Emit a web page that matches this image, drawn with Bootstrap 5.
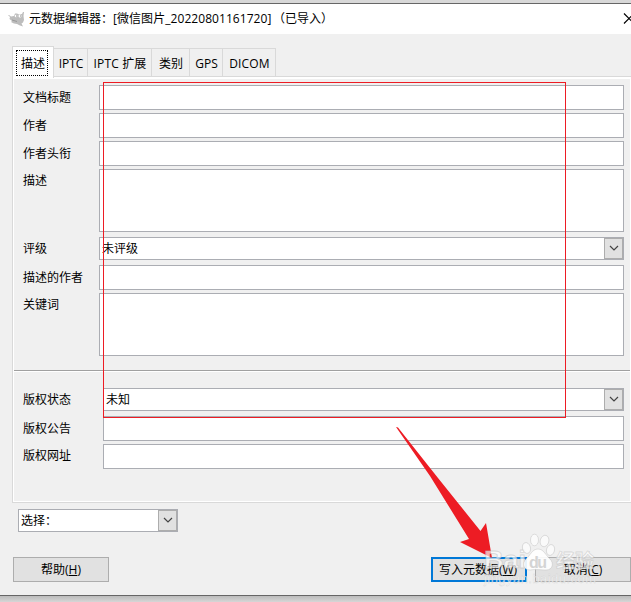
<!DOCTYPE html>
<html lang="zh-CN">
<head>
<meta charset="utf-8">
<title>元数据编辑器</title>
<link href="https://cdn.jsdelivr.net/npm/bootstrap@5.3.0/dist/css/bootstrap.min.css" rel="stylesheet">
<style>
body{width:631px;height:602px;overflow:hidden;background:#d0d0d0;font:12px/16px "Open Sans","Noto Sans CJK SC",sans-serif;color:#000}
.topedge{height:4px;background:#d8d8d8;border-bottom:1px solid #666}
.titlebar{height:30px;background:#fff;padding:0 0 0 8px}
.titlebar svg{flex:none}
.name{width:84px}
.file{width:160px;letter-spacing:.06px}
.dialog{height:562px;background:#f0f0f0;border-bottom:1px solid #666;padding-top:12px}
.shade{height:6px;background:linear-gradient(#bcbcbc,#d6d6d6)}
.tabs{height:30px;padding-left:12px}
.tabs .tabitem{height:28px;border:1px solid #d9d9d9;border-left:0;border-bottom:0;background:#f0f0f0;padding:7px 0 0 1px;text-align:center;white-space:nowrap}
.tabs .tabon{height:32px;width:42px;border-left:1px solid #d9d9d9;background:#fff;padding:3px 0 0 3px;z-index:1}
.tabs .wide{letter-spacing:.15px}
.focusbox{width:32px;height:26px;border:1px dotted #000;line-height:25px;padding-left:2px}
.pane{height:427px;margin-left:12px;border:1px solid #d9d9d9;border-right:0;box-shadow:inset 1px 2px #fff,inset -1px -1px #fff;padding:8px 7px 0 10px}
.frow{margin-bottom:3px}
.frow.after-area{margin-top:5px;margin-bottom:5px}
.cap{width:76px;flex:none;white-space:nowrap;padding-top:5px}
.cap.up{padding-top:4px}
.low .cap{width:80px}
.fld{height:25px;flex:1;background:#fff;border:1px solid #abadb3}
.area{height:63px}
.combo{height:23px;line-height:21px;padding-left:2px;overflow:hidden}
.drop{width:19px;flex:none;background:#e1e1e1;border:1px solid #adadad}
.sep{height:2px;background:#a0a0a0;border-bottom:1px solid #fff;margin:14px -6px 16px -9px}
.low .frow:first-child{margin-bottom:5px}
.choose{margin:6px 0 0 18px;width:160px}
.actions{margin:25px 0 0 13px}
.pushbtn{width:96px;height:25px;background:#e1e1e1;border:1px solid #adadad;border-radius:0;font:inherit;color:#000;padding:0;line-height:23px;text-align:center;white-space:nowrap}
.pushbtn.hot{border:2px solid #0078d7;line-height:21px;padding-right:2px}
.overlay{left:0;top:0;pointer-events:none;z-index:5}
</style>
<script src="https://cdn.jsdelivr.net/npm/bootstrap@5.3.0/dist/js/bootstrap.bundle.min.js"></script>
</head>
<body class="position-relative">
<div class="topedge"></div>
<header class="titlebar d-flex align-items-center">
<svg width="17" height="16" viewBox="0 0 17 16"><path d="M0 4h1l2 1.500 3-.5 1-2.500h2l2 1 3-.5 1-2h1l-.5 4 .5 4-1 2.500-1.500 1 1.500 3-3-1-3-1.500-3-.5-3-1.500 1-1-2.500-2L2 6z" fill="#bdbdbd"/><circle cx="8" cy="5" r="1.300" fill="#fff"/><circle cx="12" cy="5" r="1.500" fill="#fff"/><path d="M8 5h1M12 5h1" stroke="#888"/><path d="M4 9l5 1.500" stroke="#999"/></svg>
<span class="d-flex ms-1 text-nowrap"><span class="name">元数据编辑器：</span><span class="file">[微信图片_20220801161720]</span><span>（已导入）</span></span>
<svg class="ms-auto" width="8" height="12" viewBox="0 0 8 12"><path d="M1 .5l10 10M1 10.500L11 .5" stroke="#000" stroke-width="1.200" fill="none"/></svg>
</header>
<main class="dialog">
<nav class="tabs d-flex align-items-end">
<div class="tabitem tabon position-relative align-self-start"><div class="focusbox">描述</div></div>
<div class="tabitem" style="width:34px">IPTC</div>
<div class="tabitem wide" style="width:64px">IPTC 扩展</div>
<div class="tabitem" style="width:38px">类别</div>
<div class="tabitem" style="width:33px">GPS</div>
<div class="tabitem wide" style="width:53px">DICOM</div>
</nav>
<section class="pane">
<div class="frow d-flex"><div class="cap">文档标题</div><div class="fld"></div></div>
<div class="frow d-flex"><div class="cap">作者</div><div class="fld"></div></div>
<div class="frow d-flex"><div class="cap">作者头衔</div><div class="fld"></div></div>
<div class="frow d-flex"><div class="cap up">描述</div><div class="fld area"></div></div>
<div class="frow after-area d-flex"><div class="cap up">评级</div><div class="fld combo d-flex justify-content-between"><span>未评级</span><div class="drop d-flex align-items-center justify-content-center"><svg width="10" height="7" viewBox="0 0 10 7"><path d="M1 1l4 4 4-4" stroke="#444" fill="none" stroke-width="1.200"/></svg></div></div></div>
<div class="frow d-flex"><div class="cap">描述的作者</div><div class="fld"></div></div>
<div class="frow d-flex mb-0"><div class="cap up">关键词</div><div class="fld area"></div></div>
<div class="sep"></div>
<div class="low">
<div class="frow d-flex"><div class="cap up">版权状态</div><div class="fld combo d-flex justify-content-between"><span>未知</span><div class="drop d-flex align-items-center justify-content-center"><svg width="10" height="7" viewBox="0 0 10 7"><path d="M1 1l4 4 4-4" stroke="#444" fill="none" stroke-width="1.200"/></svg></div></div></div>
<div class="frow d-flex"><div class="cap">版权公告</div><div class="fld"></div></div>
<div class="frow d-flex"><div class="cap up">版权网址</div><div class="fld"></div></div>
</div>
</section>
<div class="choose d-flex"><div class="fld combo d-flex justify-content-between"><span>选择：</span><div class="drop d-flex align-items-center justify-content-center"><svg width="10" height="7" viewBox="0 0 10 7"><path d="M1 1l4 4 4-4" stroke="#444" fill="none" stroke-width="1.200"/></svg></div></div></div>
<footer class="actions d-flex">
<button class="pushbtn me-auto">帮助(<u>H</u>)</button>
<button class="pushbtn hot me-2">写入元数据(<u>W</u>)</button>
<button class="pushbtn">取消(<u>C</u>)</button>
</footer>
</main>
<div class="shade"></div>
<svg class="overlay position-absolute" width="631" height="602" viewBox="0 0 631 602">
<rect x="103.500" y="82.500" width="462" height="335" fill="none" stroke="#ed1c24"/>
<path d="M396 427l2 .5L438 478 480.500 531 486 523 492 558 460 542 469 539 430 476z" fill="#ed1c24"/>
<g fill="#fff" fill-opacity=".66" stroke="#bdbdbd" stroke-opacity=".55" stroke-width=".8" font-family="Liberation Sans,Noto Sans CJK SC,sans-serif">
<text x="484" y="568" font-size="24" font-weight="bold" textLength="42" lengthAdjust="spacingAndGlyphs">Bai</text>
<ellipse cx="526.500" cy="548" rx="4" ry="5.500" transform="rotate(-15 526.500 548)"/><ellipse cx="534.500" cy="540" rx="4" ry="5.800"/><ellipse cx="544.500" cy="541" rx="4.300" ry="5.800" transform="rotate(15 544.500 541)"/><ellipse cx="550.500" cy="550" rx="4" ry="5.500" transform="rotate(15 550.500 550)"/>
<path fill-opacity=".9" d="M538 549c6 0 8 7 12 10 4 4 3 11-4 11-4 0-11-1-16 0-7 0-8-7-4-11 4-3 6-10 12-10z"/>
<text x="556" y="568" font-size="19" font-weight="bold" textLength="38">经验</text>
<text x="484" y="583" font-size="13" stroke-width=".4" textLength="112">jingyan.baidu.com</text>
</g>
<text x="529" y="568" font-family="Liberation Sans,sans-serif" font-weight="bold" font-size="16" fill="#d4d4d4" textLength="18">du</text>
</svg>
</body>
</html>
